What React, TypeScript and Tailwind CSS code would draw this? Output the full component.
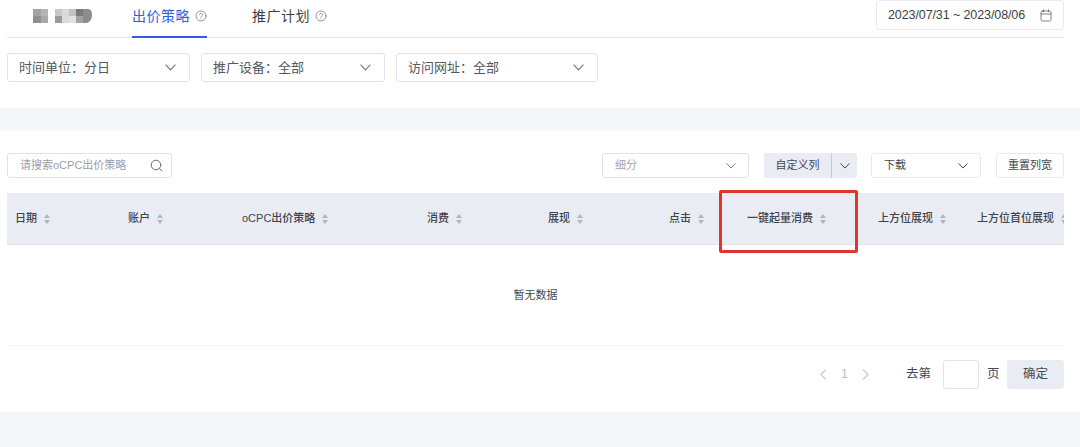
import React from "react";

const Help = () => (
  <svg width="12" height="12" viewBox="0 0 12 12" fill="none" stroke="#85888f" strokeWidth="0.9" strokeLinecap="round">
    <circle cx="6" cy="6" r="5" />
    <path d="M4.500 4.800c0-.9.7-1.400 1.500-1.400s1.500.5 1.500 1.300c0 1.100-1.500 1.100-1.500 2.200" />
    <path d="M6 8.600v.1" />
  </svg>
);

const Chevron = ({ color = "#70747f", w = 11 }: { color?: string; w?: number }) => (
  <svg width={w} height={Math.round((w * 8) / 13)} viewBox="0 0 13 8" fill="none" stroke={color} strokeWidth="1.300" strokeLinecap="round" strokeLinejoin="round">
    <path d="M1 1 6.500 6.800 12 1" />
  </svg>
);

const Sort = () => (
  <svg width="6" height="10" viewBox="0 0 6 10" fill="#b1b6c4" className="shrink-0">
    <path d="M3 0 6 4H0z" />
    <path d="M3 10 0 6h6z" />
  </svg>
);

const Select = ({ label, className }: { label: string; className: string }) => (
  <div className={`flex h-[29px] items-center justify-between rounded-[3px] border border-[#e0e3ee] bg-white pl-[11px] pr-[13px] text-[13px] text-[#545860] ${className}`}>
    <span>{label}</span>
    <Chevron />
  </div>
);

const Th = ({ label, className }: { label: string; className: string }) => (
  <div className={`flex h-full shrink-0 items-center gap-[7px] px-2 text-[11px] font-medium whitespace-nowrap text-[#3f434c] ${className}`}>
    <span>{label}</span>
    <Sort />
  </div>
);

export default function App() {
  return (
    <div className="h-[447px] w-[1080px] overflow-hidden bg-white font-['Liberation_Sans','Noto_Sans_CJK_SC',sans-serif]">
      <div className="pl-[7px] pr-[16px]">
        <div className="flex h-[38px] items-start border-b border-[#e3e5ee]">
          <svg width="60" height="15" viewBox="0 0 60 15" className="ml-[26px] mt-[8px] shrink-0 blur-[0.6px]">
            <rect x="0" y="1" width="8" height="7" fill="#a3a3a3" />
            <rect x="8" y="1" width="7" height="7" fill="#b5b5b5" />
            <rect x="0" y="8" width="8" height="7" fill="#8f8f8f" />
            <rect x="8" y="8" width="7" height="7" fill="#a8a8a8" />
            <rect x="22" y="1" width="7" height="7" fill="#c8c8c8" />
            <rect x="22" y="8" width="7" height="7" fill="#9a9a9a" />
            <rect x="29" y="1" width="7" height="14" fill="#dadada" />
            <rect x="36" y="1" width="7" height="7" fill="#c2c2c2" />
            <rect x="36" y="8" width="7" height="7" fill="#e2e2e2" />
            <rect x="43" y="1" width="7" height="7" fill="#7a7a7a" />
            <rect x="43" y="8" width="7" height="7" fill="#a2a2a2" />
            <path d="M50 1h5q4 0 4 6t-5 8h-4z" fill="#8c8c8c" />
          </svg>
          <div className="ml-[39px] flex h-[38px] w-[75px] shrink-0 items-start gap-[5px] border-b-2 border-[#2f5fe0] pt-[6px] text-[14px] leading-[20px] tracking-[0.5px] text-[#2f5fe0]">
            <span className="whitespace-nowrap">出价策略</span>
            <span className="mt-[4px]"><Help /></span>
          </div>
          <div className="ml-[45px] flex shrink-0 items-start gap-[5px] pt-[6px] text-[14px] leading-[20px] tracking-[0.5px] text-[#3c3f46]">
            <span className="whitespace-nowrap">推广计划</span>
            <span className="mt-[4px]"><Help /></span>
          </div>
          <div className="ml-auto flex h-[30px] w-[188px] items-center justify-between rounded-[3px] border border-[#e8eaf2] bg-white pl-[11px] pr-[11px] text-[12.5px] whitespace-nowrap text-[#3c3f46]">
            <span className="tracking-[-0.1px]">2023/07/31 ~ 2023/08/06</span>
            <svg width="12" height="13" viewBox="0 0 12 13" fill="none" stroke="#70747f" strokeWidth="0.9" strokeLinecap="round">
              <rect x="1" y="2" width="10" height="10" rx="1.500" />
              <path d="M1 5h10M3.500 .8v2M8.500 .8v2" />
            </svg>
          </div>
        </div>

        <div className="mt-[15px] flex gap-[11px]">
          <Select label="时间单位：分日" className="w-[183px]" />
          <Select label="推广设备：全部" className="w-[184px]" />
          <Select label="访问网址：全部" className="w-[202px]" />
        </div>
      </div>

      <div className="mt-[26px] h-[22px] bg-[#f5f6fa]" />

      <div className="h-[282px] pl-[7px] pr-[16px]">
        <div className="flex pt-[23px]">
          <div className="flex h-[25px] w-[165px] items-center justify-between rounded-[3px] border border-[#dfe2ec] pl-[12px] pr-[8px] text-[11px] text-[#9a9ea8]">
            <span>请搜索oCPC出价策略</span>
            <svg width="13" height="13" viewBox="0 0 13 13" fill="none" stroke="#6a6e78" strokeWidth="1" strokeLinecap="round">
              <circle cx="6" cy="6" r="4.800" />
              <path d="M9.600 9.600 12 12" />
            </svg>
          </div>
          <div className="ml-[430px] flex h-[25px] w-[147px] items-center justify-between rounded-[3px] border border-[#dfe2ec] pl-[12px] pr-[12px] text-[11px] text-[#a3a6af]">
            <span>细分</span>
            <Chevron w={10} />
          </div>
          <div className="ml-[15px] flex h-[25px] w-[93px] items-center rounded-[3px] bg-[#e9ecf3] text-[11px] text-[#454952]">
            <span className="w-[67px] text-center">自定义列</span>
            <span className="flex h-full flex-1 items-center justify-center border-l border-[#c6cad6]">
              <Chevron color="#3f434c" w={10} />
            </span>
          </div>
          <div className="ml-[14px] flex h-[25px] w-[110px] items-center justify-between rounded-[3px] border border-[#e8eaf2] pl-[12px] pr-[12px] text-[11px] text-[#454952]">
            <span>下载</span>
            <Chevron color="#3f434c" w={10} />
          </div>
          <div className="ml-[15px] flex h-[25px] w-[68px] items-center justify-center rounded-[3px] border border-[#e8eaf2] text-[11px] text-[#454952]">
            重置列宽
          </div>
        </div>

        <div className="relative mt-[15px]">
          <div className="flex h-[52px] overflow-hidden border-b border-[#e0e3ec] bg-[#e9ecf3]">
            <Th label="日期" className="w-[113px]" />
            <Th label="账户" className="w-[114px]" />
            <Th label="oCPC出价策略" className="w-[116px]" />
            <Th label="消费" className="w-[120px] justify-end" />
            <Th label="展现" className="w-[121px] justify-end" />
            <Th label="点击" className="w-[121px] justify-end" />
            <Th label="一键起量消费" className="w-[122px] justify-end" />
            <Th label="上方位展现" className="w-[120px] justify-end" />
            <Th label="上方位首位展现" className="w-[121px] justify-end" />
          </div>
          <div className="pointer-events-none absolute left-[712px] top-[-3px] h-[63px] w-[139px] rounded-[2px] border-[3px] border-[#e0352b]" />
          <div className="flex h-[101px] items-center justify-center border-b border-[#f1f2f6] text-[11px] text-[#454952]">
            暂无数据
          </div>
        </div>

        <div className="mt-[14px] flex h-[29px] items-center text-[12.5px] text-[#454952]">
          <div className="ml-auto flex items-center gap-[13px] text-[#b8bcc8]">
            <svg width="9" height="11" viewBox="0 0 9 11" fill="none" stroke="#c3c7d2" strokeWidth="1.100" strokeLinecap="round" strokeLinejoin="round"><path d="M6.500 1 2 5.500 6.500 10" /></svg>
            <span className="w-[7px] text-center">1</span>
            <svg width="9" height="11" viewBox="0 0 9 11" fill="none" stroke="#c3c7d2" strokeWidth="1.100" strokeLinecap="round" strokeLinejoin="round"><path d="M2.500 1 7 5.500 2.500 10" /></svg>
          </div>
          <span className="ml-[36px] w-[25px]">去第</span>
          <div className="ml-[12px] h-[29px] w-[36px] rounded-[3px] border border-[#e0e3ee]" />
          <span className="ml-[8px] w-[12px]">页</span>
          <div className="ml-[8px] flex h-[29px] w-[57px] items-center justify-center rounded-[3px] bg-[#e9ecf3]">确定</div>
        </div>
      </div>

      <div className="h-[35px] bg-[#f5f6fa]" />
    </div>
  );
}
